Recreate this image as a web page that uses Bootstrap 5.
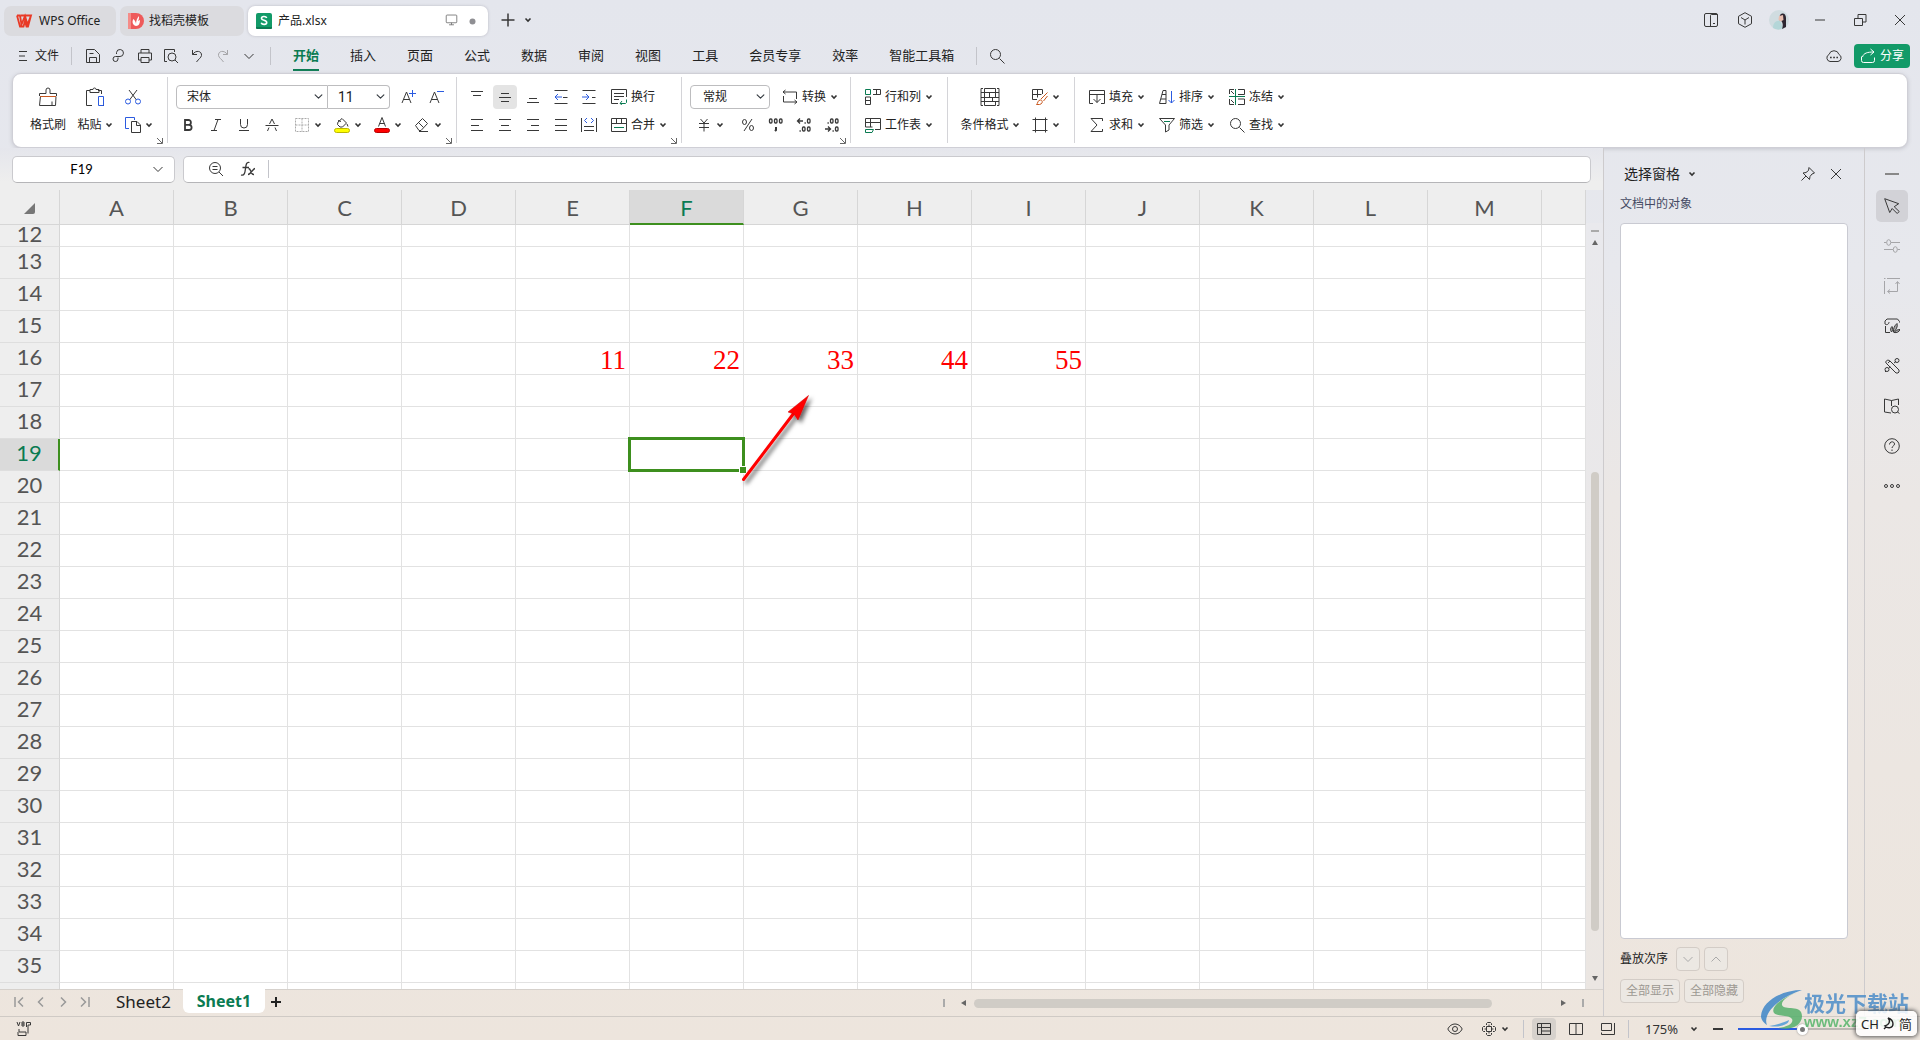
<!DOCTYPE html>
<html lang="zh-CN">
<head>
<meta charset="utf-8">
<meta name="viewport" content="width=device-width, initial-scale=1">
<title>产品.xlsx - WPS Office</title>
<link href="https://cdn.jsdelivr.net/npm/bootstrap@5.3.0/dist/css/bootstrap.min.css" rel="stylesheet">
<style>
  :root { --ink:#2b2b2b; --line:#cbcbd2; --brand:#0a7b52; --blue:#2b5be0; }
  body { font-family:"Noto Sans","Noto Sans CJK SC",sans-serif; font-size:12px; line-height:16px; color:#222;
    background:linear-gradient(180deg,#e4e6ed 0,#e7e8ed 26%,#ebe7e5 48%,#ede5dd 100%) fixed; }
  button { border:0; background:none; padding:0; color:inherit; white-space:nowrap; }
  svg { display:block; flex:none; overflow:visible; }
  .ic { width:16px; height:16px; fill:none; stroke:currentColor; color:#383838; }
  .ic-l { width:20px; height:20px; }
  .crt { width:8px; height:8px; fill:none; stroke:#333; stroke-width:1.6; }
  .b { stroke:var(--blue); } .g { stroke:var(--brand); } .o { stroke:#c9581f; }

  .titlebar { height:40px; padding:2px 0 0 4px; }
  .doc-tab { height:30px; margin-top:2px; background:#dbdbdf; border-radius:7px; }
  .doc-tab.on { background:#fff; box-shadow:0 0 3px #b9b9c2; }
  .tab-a { width:112px; padding-left:12px; } .tab-b { width:124px; padding-left:8px; } .tab-c { width:240px; padding:0 12px 0 8px; }
  .tab-a a { margin-left:7px; } .tab-b a { margin-left:5px; } .tab-c a { margin-left:6px; }
  .win-btn { width:40px; height:32px; }
  .avatar { width:20px; height:20px; }

  .menubar { height:35px; padding:0 10px 0 15px; }
  .quick { width:26px; height:26px; }
  .vr-s { width:1px; height:18px; background:#c3c4ca; }
  .menu-tabs { gap:31px; font-size:13px; padding:0 22px; }
  .menu-tabs a { color:#222; text-decoration:none; padding:5px 0; line-height:18px; border-bottom:2px solid transparent; }
  .menu-tabs a.on { color:var(--brand); font-weight:700; border-color:var(--brand); }
  .share { width:56px; height:24px; background:#129a68; color:#fff; border-radius:4px; }
  .share .ic { color:#fff; }

  .ribbon { height:75px; margin:0 12px; background:#fff; border:1px solid #cfcfd6; border-radius:9px; box-shadow:0 1px 4px #c3c4cc; }
  .rgroup { height:66px; margin-top:3px; border-right:1px solid #d4d4d8; position:relative; padding-top:6px; }
  .rgroup.last { border:0; }
  .rrow { display:flex; height:28px; align-items:center; }
  .ib { width:28px; height:24px; display:flex; align-items:center; justify-content:center; border-radius:4px; }
  .ib.on { background:#e4e4e4; width:24px; margin:0 2px; }
  .dd { width:40px; height:24px; display:flex; align-items:center; justify-content:center; gap:4px; }
  .dds { padding-left:2px; }
  .lb { height:24px; display:flex; align-items:center; gap:4px; width:70px; }
  .lb.w { width:82px; }
  .big { display:flex; flex-direction:column; align-items:center; height:56px; }
  .big > span { height:28px; display:flex; align-items:center; gap:3px; }
  .corner { position:absolute; right:4px; bottom:-1px; width:6px; height:6px; fill:none; stroke:#666; }
  .g1 { width:155px; padding-left:8px; } .g2 { width:289px; padding-left:6px; } .g3 { width:225px; padding-left:6px; }
  .g4 { width:169px; padding-left:8px; } .g5 { width:97px; padding-left:14px; } .g6 { width:127px; padding-left:10px; } .g7 { padding-left:14px; }
  .pick { height:24px; border:1px solid #bdbdbf; border-radius:4px; font-size:12px; line-height:16px; padding:3px 20px 3px 10px;
    background-size:9px; background-position:right 4px center; color:#222; }
  .pick.f { width:152px; border-radius:4px 0 0 4px; margin-left:2px; } .pick.s { width:62px; border-left:0; border-radius:0 4px 4px 0; font-family:Roboto,sans-serif; font-size:14px; }
  .pick.n { width:80px; padding-left:12px; }
  .a-btns { margin-left:4px; }

  .fbar { padding:8px 12px 0; gap:8px; height:42px; background:linear-gradient(#e5e6ec,#eee 80%); }
  .fbox { height:27px; background:#fff; border:1px solid #cacace; border-bottom-color:#b5b5b8; border-radius:5px; }
  .fbox input { border:0; outline:0; background:transparent; min-width:0; font-size:13px; }
  .namebox { width:163px; padding-right:8px; }
  .namebox input { text-align:center; font-family:Lato,sans-serif; }

  .grid-view { overflow:hidden; position:relative; background:#fff; min-height:0; }
  .cells { table-layout:fixed; width:100%; min-width:1556px; border-collapse:separate; border-spacing:0; font-family:Lato,sans-serif; }
  .cells th { background:#eee; color:#555; font-weight:400; font-size:22px; text-align:center; border:solid #d6d6d6; border-width:0 1px 1px 0; padding:0; }
  .cells thead th { height:34px; line-height:30px; padding-top:3px; }
  .cells tbody th { height:32px; line-height:27px; padding-bottom:4px; border-bottom-color:#dedede; }
  .cells td { border:solid #e2e2e2; border-width:0 1px 1px 0; padding:4px 3px 0 0; text-align:right; color:red; font:27px/27px "Liberation Serif",serif; }
  .cells tr.cut th, .cells tr.cut td { height:22px; line-height:17px; padding-top:0; padding-bottom:4px; }
  .cells thead th.on { background:#dadada; color:var(--brand); border-bottom:2px solid #3d8f1e; }
  .cells tbody th.on { background:#dadada; color:var(--brand); border-right:2px solid #3d8f1e; }
  .c-head { width:60px; } .c-col { width:114px; }
  .cells td.sel { position:relative; }
  .sel::before { content:""; position:absolute; inset:-2px -2px -2px -2px; border:3px solid #3d8f1e; }
  .sel::after { content:""; position:absolute; right:-3px; bottom:-3px; width:6px; height:6px; background:#3d8f1e; outline:1px solid #fff; }
  .arrow { position:absolute; left:735px; top:200px; width:90px; height:100px; }
  .vscroll { width:17px; padding-top:7px; margin-top:33px; background:linear-gradient(#e9e9ed,#ebe6e2); }
  .tri { fill:#666; }

  .sheetbar { height:27px; border-top:1px solid #d6d1cc; }
  .sheet { font-size:17px; line-height:24px; color:#222; text-decoration:none; }
  .sheet.on { background:#fff; color:var(--brand); font-weight:700; font-size:16px; border-radius:0 0 6px 6px; width:82px; height:24px; text-align:center; margin-top:-1px; }
  .nav-b { width:22px; height:24px; display:flex; align-items:center; justify-content:center; }
  .nav-b .ic { width:10px; height:12px; color:#999; stroke-width:1.5; }
  .thumb { background:#d0ccc6; border-radius:5px; }
  .hthumb { height:9px; width:518px; }
  .vthumb { width:8px; flex:0 1 459px; margin-top:227px; }
  .hscroll { width:641px; margin-right:19px; }
  .left-edge { border-right:1px solid #cdcbcd; }

  .panel { width:261px; border-right:1px solid #cdcbcd; padding:0 16px 13px; }
  .panel-title { font-size:14px; line-height:20px; }
  .objects { background:#fff; border:1px solid #c9cad2; border-radius:4px; }
  .sub { color:#454a63; padding:8px 0 11px; }
  .pb { height:24px; border:1px solid #d3ccc6; border-radius:4px; background:#ece8e3; color:#9c9892; }
  .pb.sq { width:24px; } .pb.tx { width:60px; }
  .side { width:55px; padding:10px 2px 0 0; }
  .side button { width:32px; height:32px; margin-bottom:8px; border-radius:5px; display:flex; align-items:center; justify-content:center; }
  .side button.on { background:#d2d2d7; }
  .side button.min { margin-bottom:0; }
  .dim .ic { color:#a5a5a8; }

  .statusbar { height:24px; border-top:1px solid #cfcac5; padding-left:16px; }
  .st { width:24px; height:22px; display:flex; align-items:center; justify-content:center; border-radius:4px; }
  .statusbar .dd { height:22px; }
  .st.on { background:#d6d1cc; }
  .stools { width:477px; }
  .zoomv { font-size:13px; color:#333; }
  .zoomer { appearance:none; width:128px; height:14px; background:transparent; margin:0; }
  .zoomer::-webkit-slider-runnable-track { height:2px; background:linear-gradient(90deg,var(--blue) 50%,#bdb8b3 50%); }
  .zoomer::-webkit-slider-thumb { appearance:none; width:11px; height:11px; margin-top:-4px; border-radius:50%; background:#777; border:3px solid #fff; box-shadow:0 0 2px #888; }
  .wmark { position:absolute; right:8px; bottom:9px; width:152px; opacity:.85; pointer-events:none; }
  .wmark .cn { font:700 21px/24px "Noto Sans CJK SC",sans-serif; color:#4d8dc9; white-space:nowrap; }
  .wmark .en { font:700 15px/16px "Liberation Sans",sans-serif; color:#57b56c; white-space:nowrap; }
  .ime { position:absolute; right:3px; bottom:4px; width:61px; height:25px; background:rgba(255,255,255,.85); border-radius:5px; box-shadow:0 0 4px 1px #555; font-size:13px; color:#222; gap:4px; }
</style>
</head>
<body class="vh-100 d-flex flex-column overflow-hidden position-relative">

<svg width="0" height="0" class="position-absolute" aria-hidden="true">
  <symbol id="caret" viewBox="0 0 8 8"><path d="M1.500 2.500 4 5l2.500-2.500"/></symbol>
  <symbol id="chev" viewBox="0 0 16 16"><path d="M3.500 6 8 10.500 12.500 6"/></symbol>
  <symbol id="menu" viewBox="0 0 16 16"><path d="M4 3.500h8M4 8h6M4 12.500h8"/></symbol>
  <symbol id="save" viewBox="0 0 16 16"><path d="M1.500 14.500v-13h8l5 5v8zM4.500 14.500v-5h7v5M4.500 5.500h4"/></symbol>
  <symbol id="export" viewBox="0 0 16 16"><path d="M5.500 6V4.500a3.500 3.500 0 1 1 3.500 4H4.500a2.500 2.500 0 1 0 2.500 2.500V9.500"/></symbol>
  <symbol id="print" viewBox="0 0 16 16"><path d="M4 5V1.500h8V5M4 12H1.500V5h13v7H12M4 9.500h8v5H4z"/></symbol>
  <symbol id="preview" viewBox="0 0 16 16"><path d="M4 13.500H1.500v-12h10V4"/><circle cx="9" cy="9" r="4"/><path d="m12 12 3 3"/></symbol>
  <symbol id="undo" viewBox="0 0 16 16"><path d="M3.500 2v4.500H8M3.500 6.500C7 1.500 13 3 12.500 7.500 12 10 9.500 11 7.500 14"/></symbol>
  <symbol id="redo" viewBox="0 0 16 16"><path d="M12.500 2v4.500H8M12.500 6.500C9 1.500 3 3 3.500 7.500 4 10 6.500 11 8.500 14"/></symbol>
  <symbol id="search" viewBox="0 0 16 16"><circle cx="6.500" cy="6.500" r="5"/><path d="m10.500 10.500 5 5"/></symbol>
  <symbol id="cloud" viewBox="0 0 16 16"><path d="M4 13.500a3.700 3.700 0 0 1-1-7 5.200 5.200 0 0 1 10 0 3.700 3.700 0 0 1-1 7z"/><path d="M4 9.500h1.700M7.200 9.500h1.700M10.400 9.500H12" stroke-width="1.700"/></symbol>
  <symbol id="share" viewBox="0 0 16 16"><path d="M1.500 8.500v4a2 2 0 0 0 2 2h9a2 2 0 0 0 2-2V9.500M2.500 9c1-4 5-5 11.500-5M10.500 1 14 4l-3.500 3"/></symbol>
  <symbol id="layout" viewBox="0 0 16 16"><rect x="1.500" y="1.500" width="13" height="13" rx="1.500"/><path d="M7.500 14.500v-11a1 1 0 0 1 1-1h6M10 11.500h2"/></symbol>
  <symbol id="cube" viewBox="0 0 16 16"><path d="m8 .7 6.500 3.600v7.400L8 15.300l-6.500-3.600V4.300zM4 5.500 8 8l4-2.500M8 8v4.500"/></symbol>
  <symbol id="minus" viewBox="0 0 16 16"><path d="M3 8h10"/></symbol>
  <symbol id="restore" viewBox="0 0 16 16"><path d="M2.500 6.500h8v7h-8zM6 6V2.500h8V10h-3.500"/></symbol>
  <symbol id="close" viewBox="0 0 16 16"><path d="m3 3 10 10M13 3 3 13"/></symbol>
  <symbol id="brush" viewBox="0 0 20 20"><path d="M1.500 9V6.500H8V3a2 2 0 0 1 4 0v3.500h6.500V9M2.500 9 1.500 18.500h16L18 9.500M14 14.500v4"/><path class="o" d="M2 9.500h16"/></symbol>
  <symbol id="paste" viewBox="0 0 20 20"><path d="M7 18.500H1.500v-15H5M13 3.500h3.500V7M5 5.500v-3h3a1.500 1.500 0 0 1 3 0h3v3zM16 18.500h3"/><path class="b" d="M13.500 9.500h5v9h-5z"/></symbol>
  <symbol id="cut" viewBox="0 0 16 16"><path d="m4 1 7.500 10M12 1 4.500 11"/><circle class="b" cx="3" cy="12.500" r="2.500"/><circle class="b" cx="13" cy="12.500" r="2.500"/></symbol>
  <symbol id="copy" viewBox="0 0 16 16"><path class="b" d="M4 11.500H.5V.5h9V3"/><path d="M6.500 4.500H12l3.500 3.500v7.500h-9zM11.500 5v3.500h4"/></symbol>
  <symbol id="bold" viewBox="0 0 16 16"><path stroke-width="1.800" d="M5 3h3.500a2.300 2.300 0 0 1 0 4.800H5zM5 7.800h4a2.600 2.600 0 0 1 0 5.200H5z"/></symbol>
  <symbol id="italic" viewBox="0 0 16 16"><path d="M7 2.500h6M3 13.500h6M10 2.500l-4 11"/></symbol>
  <symbol id="under" viewBox="0 0 16 16"><path d="M4.500 2v5.500a3.500 3.500 0 0 0 7 0V2M3 13.500h10"/></symbol>
  <symbol id="strike" viewBox="0 0 16 16"><path d="M1.500 8.500h13M5.500 7 8 2l2.500 5M5 10.500 3.500 14M11 10.500l1.500 3.500"/></symbol>
  <symbol id="border" viewBox="0 0 16 16"><path stroke="#aaa" stroke-dasharray="2 1" d="M1.500 1.500h13v13h-13zM8 1.500v13M1.500 8h13"/></symbol>
  <symbol id="fill" viewBox="0 0 16 16"><path d="m4 5 4-3.500 4.500 4.500-4 4H6L3.500 7.500zM4 3.500l3 1M13 7l1 2.500"/><rect x=".5" y="11.500" width="15" height="4" rx="2" fill="#ff0" stroke="#bdb800"/></symbol>
  <symbol id="fcolor" viewBox="0 0 16 16"><path d="M4.500 9.500 8 .5l3.500 9M5.500 6.500h5"/><rect x=".5" y="11.500" width="15" height="4" rx="2" fill="red" stroke="#b80000"/></symbol>
  <symbol id="erase" viewBox="0 0 16 16"><path d="m1.500 8.500 7-7 5 5-6.500 7H5zM4.500 5.500l5 5M5 14.500h9"/></symbol>
  <symbol id="aup" viewBox="0 0 16 16"><path d="m2 14 4.500-11L11 14M3.500 10.500h6"/><path class="b" d="M12.500 1v7M9 4.500h7"/></symbol>
  <symbol id="adn" viewBox="0 0 16 16"><path d="m2 14 4.500-11L11 14M3.500 10.500h6"/><path class="b" d="M9 2.500h7"/></symbol>
  <symbol id="vtop" viewBox="0 0 16 16"><path d="M2 2.500h12M4 6.500h8"/></symbol>
  <symbol id="vmid" viewBox="0 0 16 16"><path d="M4 4.500h8M2 8.500h12M4 12.500h8"/></symbol>
  <symbol id="vbot" viewBox="0 0 16 16"><path d="M4 9.500h8M2 13.500h12"/></symbol>
  <symbol id="outd" viewBox="0 0 16 16"><path d="M1.500 1.500h13M10 8.500h4.500M1.500 14.500h13"/><path class="b" d="M9 8H2M5 5 2 8l3 3"/></symbol>
  <symbol id="ind" viewBox="0 0 16 16"><path d="M1.500 1.500h13M11 8.500h3.500M1.500 14.500h13"/><path class="b" d="M1 8h7M5 5l3 3-3 3"/></symbol>
  <symbol id="left" viewBox="0 0 16 16"><path d="M2 2.500h12M2 8.500h8M2 13.500h12"/></symbol>
  <symbol id="center" viewBox="0 0 16 16"><path d="M2 2.500h12M4 8.500h8M2 13.500h12"/></symbol>
  <symbol id="right" viewBox="0 0 16 16"><path d="M2 2.500h12M6 8.500h8M2 13.500h12"/></symbol>
  <symbol id="just" viewBox="0 0 16 16"><path d="M2 2.500h12M2 8.500h12M2 13.500h12"/></symbol>
  <symbol id="dist" viewBox="0 0 16 16"><path d="M.5 1v14M15.500 1v14M3 9.500h10M3 13.500h10"/><path class="b" d="M6 1 3.500 3.500 6 6M10 1l2.500 2.500L10 6"/></symbol>
  <symbol id="wrap" viewBox="0 0 16 16"><path d="M7 14.500H.5V.5h15V8M3 4.500h10M3 7.500h10M3 10.500h5"/><path class="g" d="M15.500 10.500v3l-1 1H9M11 12l-2 2.500 2 1"/></symbol>
  <symbol id="merge" viewBox="0 0 16 16"><path d="M.5 1.500h15v13H.5zM.5 6.500h15M5.500 1.500v5M10.500 1.500v5"/><path class="g" d="M3 10.500h10"/></symbol>
  <symbol id="convert" viewBox="0 0 16 16"><path d="M3.500 1 1 3l2.500 2M1 3h13.500v7M1.500 7v6H15M12.500 11l2.500 2-2.500 2"/></symbol>
  <symbol id="yen" viewBox="0 0 16 16"><path d="m4.500 2 3.500 4 3.500-4M3 6.500h10M3 10.500h10M8 6.500v8"/></symbol>
  <symbol id="pct" viewBox="0 0 16 16"><ellipse cx="4.500" cy="5" rx="2" ry="2.500"/><ellipse cx="11.500" cy="11" rx="2" ry="2.500"/><path d="m12 2-8 12"/></symbol>
  <symbol id="k000" viewBox="0 0 16 16"><g stroke-width="1.300"><rect x="1.500" y="2" width="2.500" height="4" rx="1"/><rect x="6.500" y="2" width="2.500" height="4" rx="1"/><rect x="11.500" y="2" width="2.500" height="4" rx="1"/><path stroke-width="2" d="M8 10v3l-1 1"/></g></symbol>
  <symbol id="decl" viewBox="0 0 16 16"><g stroke-width="1.300"><path d="M7 4H1.500M4 1.500 1.500 4 4 6.500"/><rect x="11.500" y="2" width="2.500" height="4" rx="1"/><rect x="6.500" y="10" width="2.500" height="4" rx="1"/><rect x="11.500" y="10" width="2.500" height="4" rx="1"/><path d="M8.500 6h1.300M3.500 14h1.300"/></g></symbol>
  <symbol id="decr" viewBox="0 0 16 16"><g stroke-width="1.300"><path d="M1 12h5.500M4 9.500 6.500 12 4 14.500"/><rect x="11.500" y="2" width="2.500" height="4" rx="1"/><rect x="6.500" y="2" width="2.500" height="4" rx="1"/><rect x="11.500" y="10" width="2.500" height="4" rx="1"/><path d="M3.500 6h1.300M8.500 14h1.300"/></g></symbol>
  <symbol id="rows" viewBox="0 0 16 16"><path d="M8 .5h7.500v5H8M11.500.5v5M.5 8h5v7.500h-5zM.5 11.500h5"/><path class="g" d="M.5.5h5v5h-5z"/></symbol>
  <symbol id="wsheet" viewBox="0 0 16 16"><path d="M.5 10V1.500h15v11H10M.5 5.500h15M5.500 1.500V10M.5 10h7"/><path class="g" d="M.5 12.500v3H7l1.500-3z"/></symbol>
  <symbol id="cond" viewBox="0 0 20 20"><path d="M3 1.500H1v17h2M17 1.500h2v17h-2M4.500 1.500h11v4h-11zM4.500 5.500v9M15.500 5.500v5M1 10.500h18M1 5.500h18M4.500 14.500h11v4h-11zM1 14.500h18M9.500 5.500v5M12.500 10.500v4"/></symbol>
  <symbol id="style" viewBox="0 0 16 16"><path d="M5 10.500H.5V.5h10V5M.5 5.500h9M5.500.5v8"/><path class="o" d="M15.500 3.500 9 10M15.500 7l-4 5M4.500 15.500c1.500-1 1-4.500 4-4.500 2.500 0 2.500 4-1 4.500z"/></symbol>
  <symbol id="frame" viewBox="0 0 16 16"><path d="M3.500.5v15M13.500.5v15M.5 2.500h15M.5 13.500h15"/></symbol>
  <symbol id="filld" viewBox="0 0 16 16"><path d="M4 14.500H.5v-13h15v13H12M.5 5.500h15M8 5.500v8M4.500 10 8 13.500 11.500 10"/></symbol>
  <symbol id="sum" viewBox="0 0 16 16"><path d="M13.500 4V1.500H2L8 8l-6 6.500h11.500V12"/></symbol>
  <symbol id="sort" viewBox="0 0 16 16"><path d="m.5 14.500 3.500-13h3v13M2 10h5M3 5.500h4M.5 14.500H7"/><path class="b" d="M12.500 2v12M9.500 11l3 3 3-3"/></symbol>
  <symbol id="filter" viewBox="0 0 16 16"><path d="M.5 1.500h15L10 8v5l-3.500 2V8z"/><path class="g" d="M5 4.500h6"/></symbol>
  <symbol id="freeze" viewBox="0 0 16 16"><path d="M5 .5H.5V5M2 2l3 3M9 .5h6.500v5H9M.5 10v5.500H5M2 11l3 3M9 10h6.500v5.500H9"/><path class="g" d="M6.500 0v16M0 7.500h16"/></symbol>
  <symbol id="fx" viewBox="0 0 16 16"><path stroke-width="1.300" d="M9.500 1.500c-3-1-3.500 2-4 6S4.500 15 1 14M2.500 6.500H9M8.500 7.500c3 0 2 6.500 5.500 6M15 7.500c-2 0-4.500 6-7 6"/></symbol>
  <symbol id="fsearch" viewBox="0 0 16 16"><circle cx="7" cy="7" r="5.500"/><path d="m11 11 4 4M4.500 5.500h5M4.500 8.500h5"/></symbol>
  <symbol id="pin" viewBox="0 0 16 16"><path d="m9 1.500 5.500 5.500-2.500 1-2 2.500-.5 3L3 7l3-.5 2.500-2zM6 10l-4.500 4.500"/></symbol>
  <symbol id="cursor" viewBox="0 0 16 16"><path d="m.7.7 14 5-4.500 3 5 4.800-2 2-5-5-2.500 4z"/></symbol>
  <symbol id="sliders" viewBox="0 0 16 16"><path d="M0 4.500h2.500M7 4.500h9M0 11.500h9M13.500 11.500H16"/><ellipse cx="4.700" cy="4.500" rx="2" ry="2.800"/><ellipse cx="11.300" cy="11.500" rx="2" ry="2.800"/></symbol>
  <symbol id="resize" viewBox="0 0 16 16"><path d="M3 .5h13M.5 3v13M0 .5h1.500M13.500 4v9.500H4M11.500 6l2-2.500 2 2.500M6 11.500l-2.500 2 2.500 2"/></symbol>
  <symbol id="beauty" viewBox="0 0 16 16"><path d="M15.500 4.500v-1l-2-2.500H3L1 3v3c2 1.500 4 0 4-2M1.500 8v6.500H6"/><path fill="currentColor" fill-opacity=".35" d="M7.500 14c-1.500-2-1-4 .5-5.500 1 2 1 4-.5 5.500zM9.500 14c-.5-3 1-6.500 3.500-8.500 1 3-1 6.500-3.500 8.500zM10 14.500c1.500-2 3.500-3 6-3-1 2.500-3 3.500-6 3z"/></symbol>
  <symbol id="tools" viewBox="0 0 16 16"><path d="m1.500 4 2-2 2 .5L15 12v2l-1 1h-2L3 6zM6 3 4 5"/><circle cx="13" cy="2.500" r="2"/><circle cx="3" cy="11.500" r="2"/><path d="m10 5 2-1.500M5 10l1-1.500M1 14l1-1"/></symbol>
  <symbol id="book" viewBox="0 0 16 16"><path d="M7 15 .5 14V1L7.500 2.500 14.500 1v6M7.500 2.500V8"/><circle cx="11" cy="11.500" r="3.500"/><path d="m13.500 14 2 1.500"/></symbol>
  <symbol id="help" viewBox="0 0 16 16"><circle cx="8" cy="8" r="7.300"/><path d="M5.500 6.500c0-3.500 5-3.500 5-.5C10.500 8 8 8 8 10M8 11.500V13"/></symbol>
  <symbol id="more" viewBox="0 0 16 16"><circle cx="2" cy="8" r="1.500"/><circle cx="8" cy="8" r="1.500"/><circle cx="14" cy="8" r="1.500"/></symbol>
  <symbol id="eye" viewBox="0 0 16 16"><path d="M.8 8C4 1.300 12 1.300 15.200 8 12 14.700 4 14.700.8 8z"/><circle cx="8" cy="8" r="2.500"/></symbol>
  <symbol id="cross" viewBox="0 0 16 16"><path d="M5.500 4V2.500l1-1h3l1 1V4M12 5.500h1.500l1 1v3l-1 1H12M10.500 12v1.500l-1 1h-3l-1-1V12M4 10.500H2.500l-1-1v-3l1-1H4M5.500 5.500h5v5h-5zM8 3.500v2M8 10.500v2M3.500 8h2M10.500 8h2"/></symbol>
  <symbol id="normal" viewBox="0 0 16 16"><path d="M1.500 2.500h13v11h-13zM1.500 6.500h13M5.500 2.500v11M5.500 10h9"/></symbol>
  <symbol id="split" viewBox="0 0 16 16"><path d="M1.500 2.500h13v11h-13zM8 2.500v11"/></symbol>
  <symbol id="read" viewBox="0 0 16 16"><path d="M1.500 2.500h10v7h-10zM14.500 2v11.500h-13v-2"/></symbol>
  <symbol id="macro" viewBox="0 0 16 16"><path d="m1 1 1.500 4L4 1M6 1v4h2V3H6M8 3V1H6M10.500 6V1.500h4V4h-2.500v8.500M3 8v3h7v3.500H2V11"/></symbol>
  <symbol id="screen" viewBox="0 0 16 16"><rect x="1.500" y="2.500" width="13" height="9.500" rx="1"/><path d="M5 14.500h6M8 12v2.500"/></symbol>
  <symbol id="plus" viewBox="0 0 16 16"><path d="M8 1.500v13M1.500 8h13"/></symbol>
</svg>

<header class="titlebar d-flex align-items-center">
  <div class="doc-tab tab-a d-flex align-items-center me-1">
    <svg width="16" height="14" viewBox="0 0 16 14"><path d="M1 1.500h3l1.500 9L9 2l2.500 8.500L15 1.500H5M1 1.500l3 11h3.500L9 7l1.500 5.500h1.500L15 1.500" fill="none" stroke="#e93a26" stroke-width="1.800"/></svg>
    <a class="text-reset text-decoration-none" href="#">WPS Office</a>
  </div>
  <div class="doc-tab tab-b d-flex align-items-center me-1">
    <svg width="16" height="16" viewBox="0 0 16 16"><path d="M0 0h8a8 8 0 0 1 0 16H0z" fill="#ee5a5a"/><path d="M0 0h3v16H0z" fill="#f58c88"/><path d="M8 13C4 12 4 8 5.500 6 7 8 8 9 8 11c0-3 1-6 3-8 0 2 0 3-1 5l2-1c0 3-1 6-4 6z" fill="#fff"/></svg>
    <a class="text-reset text-decoration-none" href="#">找稻壳模板</a>
  </div>
  <div class="doc-tab on tab-c d-flex align-items-center">
    <svg width="16" height="16" viewBox="0 0 16 16"><rect width="16" height="16" rx="2" fill="#129a68"/><path d="M0 14h16v1a1 1 0 0 1-1 1H1a1 1 0 0 1-1-1z" fill="#0a7b52"/><path d="M10.700 5C10 3 5.500 3 5.500 5.400c0 2.400 5.200 1.400 5.200 4 0 2.600-4.700 2.600-5.500.3" fill="none" stroke="#fff" stroke-width="1.600"/></svg>
    <a class="me-auto text-reset text-decoration-none" href="#">产品.xlsx</a>
    <svg class="ic opacity-75" width="13" height="13"><use href="#screen" width="13" height="13"/></svg>
    <svg class="ms-2" width="7" height="7"><circle cx="3.500" cy="3.500" r="3" fill="#8f8f93"/></svg>
  </div>
  <button class="ms-1 p-1 ps-2" aria-label="新建"><svg class="ic" stroke-width="1.5"><use href="#plus"/></svg></button>
  <button class="p-1" aria-label="标签列表"><svg class="crt"><use href="#caret"/></svg></button>
  <div class="ms-auto d-flex align-items-center">
    <button class="quick me-1" aria-label="布局"><svg class="ic mx-auto"><use href="#layout"/></svg></button>
    <button class="quick me-2 ms-1" aria-label="应用"><svg class="ic mx-auto"><use href="#cube"/></svg></button>
    <button class="quick me-2" aria-label="账号"><svg class="avatar mx-auto" viewBox="0 0 20 20"><circle cx="10" cy="10" r="10" fill="#d0dce0"/><path d="M4 18c0-5 3-8 7-7l3 7a10 10 0 0 1-10 0z" fill="#b4d6d8"/><path d="M11 5c3-3 6-1 6 3v9l-4 2c2-5 0-9-3-9z" fill="#2d2630"/><path d="M10 6l4-1 .5 5-3 1.500-2-2z" fill="#e8bfb0"/></svg></button>
    <button class="win-btn" aria-label="最小化"><svg class="ic mx-auto"><use href="#minus"/></svg></button>
    <button class="win-btn" aria-label="还原"><svg class="ic mx-auto"><use href="#restore"/></svg></button>
    <button class="win-btn" aria-label="关闭"><svg class="ic mx-auto"><use href="#close"/></svg></button>
  </div>
</header>

<nav class="menubar d-flex align-items-center">
  <button class="d-flex align-items-center gap-1 me-2"><svg class="ic"><use href="#menu"/></svg>文件</button>
  <span class="vr-s ms-1 me-1"></span>
  <div class="d-flex ps-1">
    <button class="quick" aria-label="保存"><svg class="ic mx-auto"><use href="#save"/></svg></button>
    <button class="quick" aria-label="输出"><svg class="ic mx-auto"><use href="#export"/></svg></button>
    <button class="quick" aria-label="打印"><svg class="ic mx-auto"><use href="#print"/></svg></button>
    <button class="quick" aria-label="预览"><svg class="ic mx-auto"><use href="#preview"/></svg></button>
    <button class="quick" aria-label="撤销"><svg class="ic mx-auto"><use href="#undo"/></svg></button>
    <button class="quick dim" aria-label="恢复"><svg class="ic mx-auto"><use href="#redo"/></svg></button>
    <button class="quick" aria-label="更多"><svg class="ic mx-auto"><use href="#chev"/></svg></button>
  </div>
  <span class="vr-s ms-2"></span>
  <div class="menu-tabs d-flex">
    <a class="on" href="#">开始</a><a href="#">插入</a><a href="#">页面</a><a href="#">公式</a><a href="#">数据</a><a href="#">审阅</a><a href="#">视图</a><a href="#">工具</a><a href="#">会员专享</a><a href="#">效率</a><a href="#">智能工具箱</a>
  </div>
  <span class="vr-s"></span>
  <button class="ms-2 ps-1" aria-label="搜索"><svg class="ic"><use href="#search"/></svg></button>
  <button class="ms-auto me-2 pe-1" aria-label="云"><svg class="ic"><use href="#cloud"/></svg></button>
  <button class="share d-flex align-items-center justify-content-center gap-1"><svg class="ic"><use href="#share"/></svg>分享</button>
</nav>

<section class="ribbon d-flex flex-shrink-0">
  <div class="rgroup g1 d-flex">
    <button class="big" style="width:54px"><span><svg class="ic ic-l"><use href="#brush"/></svg></span><span>格式刷</span></button>
    <button class="big" style="width:40px"><span><svg class="ic ic-l"><use href="#paste"/></svg></span><span>粘贴<svg class="crt"><use href="#caret"/></svg></span></button>
    <div>
      <div class="rrow"><button class="ib ms-1" aria-label="剪切"><svg class="ic"><use href="#cut"/></svg></button></div>
      <div class="rrow"><button class="dd ms-1" aria-label="复制"><svg class="ic"><use href="#copy"/></svg><svg class="crt"><use href="#caret"/></svg></button></div>
    </div>
    <svg class="corner"><path d="M0 0l5 5M5.500 0v5.500H0"/></svg>
  </div>
  <div class="rgroup g2">
    <div class="rrow">
      <select class="form-select pick f" aria-label="字体"><option>宋体</option></select><select class="form-select pick s" aria-label="字号"><option>11</option></select>
      <button class="ib a-btns" aria-label="增大字号"><svg class="ic"><use href="#aup"/></svg></button>
      <button class="ib" aria-label="减小字号"><svg class="ic"><use href="#adn"/></svg></button>
    </div>
    <div class="rrow">
      <button class="ib" aria-label="加粗"><svg class="ic"><use href="#bold"/></svg></button>
      <button class="ib" aria-label="倾斜"><svg class="ic"><use href="#italic"/></svg></button>
      <button class="ib" aria-label="下划线"><svg class="ic"><use href="#under"/></svg></button>
      <button class="ib" aria-label="删除线"><svg class="ic"><use href="#strike"/></svg></button>
      <div class="dds d-flex">
      <button class="dd" aria-label="边框"><svg class="ic"><use href="#border"/></svg><svg class="crt"><use href="#caret"/></svg></button>
      <button class="dd" aria-label="填充颜色"><svg class="ic"><use href="#fill"/></svg><svg class="crt"><use href="#caret"/></svg></button>
      <button class="dd" aria-label="字体颜色"><svg class="ic"><use href="#fcolor"/></svg><svg class="crt"><use href="#caret"/></svg></button>
      <button class="dd" aria-label="清除"><svg class="ic"><use href="#erase"/></svg><svg class="crt"><use href="#caret"/></svg></button>
      </div>
    </div>
    <svg class="corner"><path d="M0 0l5 5M5.500 0v5.500H0"/></svg>
  </div>
  <div class="rgroup g3">
    <div class="rrow">
      <button class="ib" aria-label="顶端对齐"><svg class="ic"><use href="#vtop"/></svg></button>
      <button class="ib on" aria-label="垂直居中"><svg class="ic"><use href="#vmid"/></svg></button>
      <button class="ib" aria-label="底端对齐"><svg class="ic"><use href="#vbot"/></svg></button>
      <button class="ib" aria-label="减少缩进"><svg class="ic"><use href="#outd"/></svg></button>
      <button class="ib" aria-label="增加缩进"><svg class="ic"><use href="#ind"/></svg></button>
      <button class="lb ms-2"><svg class="ic"><use href="#wrap"/></svg>换行</button>
    </div>
    <div class="rrow">
      <button class="ib" aria-label="左对齐"><svg class="ic"><use href="#left"/></svg></button>
      <button class="ib" aria-label="水平居中"><svg class="ic"><use href="#center"/></svg></button>
      <button class="ib" aria-label="右对齐"><svg class="ic"><use href="#right"/></svg></button>
      <button class="ib" aria-label="两端对齐"><svg class="ic"><use href="#just"/></svg></button>
      <button class="ib" aria-label="分散对齐"><svg class="ic"><use href="#dist"/></svg></button>
      <button class="lb ms-2"><svg class="ic"><use href="#merge"/></svg>合并<svg class="crt"><use href="#caret"/></svg></button>
    </div>
    <svg class="corner"><path d="M0 0l5 5M5.500 0v5.500H0"/></svg>
  </div>
  <div class="rgroup g4">
    <div class="rrow">
      <select class="form-select pick n" aria-label="数字格式"><option>常规</option></select>
      <button class="lb ms-2 ps-1"><svg class="ic"><use href="#convert"/></svg>转换<svg class="crt"><use href="#caret"/></svg></button>
    </div>
    <div class="rrow">
      <button class="dd" aria-label="货币"><svg class="ic"><use href="#yen"/></svg><svg class="crt"><use href="#caret"/></svg></button>
      <button class="ib ms-1" aria-label="百分比"><svg class="ic"><use href="#pct"/></svg></button>
      <button class="ib" aria-label="千位分隔"><svg class="ic"><use href="#k000"/></svg></button>
      <button class="ib" aria-label="增加小数位"><svg class="ic"><use href="#decl"/></svg></button>
      <button class="ib" aria-label="减少小数位"><svg class="ic"><use href="#decr"/></svg></button>
    </div>
    <svg class="corner"><path d="M0 0l5 5M5.500 0v5.500H0"/></svg>
  </div>
  <div class="rgroup g5">
    <div class="rrow"><button class="lb w"><svg class="ic"><use href="#rows"/></svg>行和列<svg class="crt"><use href="#caret"/></svg></button></div>
    <div class="rrow"><button class="lb w"><svg class="ic"><use href="#wsheet"/></svg>工作表<svg class="crt"><use href="#caret"/></svg></button></div>
  </div>
  <div class="rgroup g6 d-flex">
    <button class="big" style="width:64px"><span><svg class="ic ic-l"><use href="#cond"/></svg></span><span>条件格式<svg class="crt"><use href="#caret"/></svg></span></button>
    <div class="ps-1">
      <div class="rrow"><button class="dd" aria-label="单元格样式"><svg class="ic"><use href="#style"/></svg><svg class="crt"><use href="#caret"/></svg></button></div>
      <div class="rrow"><button class="dd" aria-label="单元格"><svg class="ic"><use href="#frame"/></svg><svg class="crt"><use href="#caret"/></svg></button></div>
    </div>
  </div>
  <div class="rgroup g7 last">
    <div class="rrow">
      <button class="lb"><svg class="ic"><use href="#filld"/></svg>填充<svg class="crt"><use href="#caret"/></svg></button>
      <button class="lb"><svg class="ic"><use href="#sort"/></svg>排序<svg class="crt"><use href="#caret"/></svg></button>
      <button class="lb"><svg class="ic"><use href="#freeze"/></svg>冻结<svg class="crt"><use href="#caret"/></svg></button>
    </div>
    <div class="rrow">
      <button class="lb"><svg class="ic"><use href="#sum"/></svg>求和<svg class="crt"><use href="#caret"/></svg></button>
      <button class="lb"><svg class="ic"><use href="#filter"/></svg>筛选<svg class="crt"><use href="#caret"/></svg></button>
      <button class="lb"><svg class="ic"><use href="#search"/></svg>查找<svg class="crt"><use href="#caret"/></svg></button>
    </div>
  </div>
</section>

<main class="d-flex flex-grow-1" style="min-height:0">
  <div class="left-edge d-flex flex-column flex-grow-1" style="min-width:0">
    <div class="fbar d-flex flex-shrink-0">
      <div class="fbox namebox d-flex align-items-center">
        <input class="flex-grow-1" value="F19" aria-label="名称框">
        <button aria-label="名称列表"><svg class="ic"><use href="#chev"/></svg></button>
      </div>
      <div class="fbox d-flex align-items-center flex-grow-1 ps-4">
        <button aria-label="查找公式"><svg class="ic"><use href="#fsearch"/></svg></button>
        <button class="ms-3 me-2" aria-label="插入函数"><svg class="ic"><use href="#fx"/></svg></button>
        <span class="vr-s ms-1"></span>
        <input class="flex-grow-1 ps-2" aria-label="编辑栏">
      </div>
    </div>
    <div class="d-flex flex-grow-1" style="min-height:0">
      <div class="grid-view flex-grow-1">
        <table class="cells" id="cells"></table>
        <svg class="arrow" viewBox="735 391 90 100"><defs><filter id="sh" x="-30%" y="-30%" width="160%" height="160%"><feDropShadow dx="3" dy="3" stdDeviation="2" flood-opacity=".6"/></filter></defs>
          <g filter="url(#sh)"><path d="M743.500 480.500 794 414" stroke="red" stroke-width="3" stroke-linecap="round"/><path d="M808.500 396.500 798 421l-4-6-6-2z" fill="red" stroke="#c00" stroke-width=".5"/></g></svg>
      </div>
      <div class="vscroll d-flex flex-column align-items-center flex-shrink-0">
        <svg width="8" height="2"><path d="M0 0h8v2H0z" fill="#aaa"/></svg>
        <svg class="tri mt-2" width="6" height="5"><path d="M3 0l3 5H0z"/></svg>
        <div class="thumb vthumb"></div>
        <svg class="tri mt-auto mb-2" width="6" height="5"><path d="M0 0h6L3 5z"/></svg>
      </div>
    </div>
    <div class="sheetbar d-flex flex-shrink-0 ps-2">
      <button class="nav-b" aria-label="首个"><svg class="ic" viewBox="0 0 10 12"><path d="M1 1v10M9 1.500 4.500 6 9 10.500"/></svg></button>
      <button class="nav-b" aria-label="上一个"><svg class="ic" viewBox="0 0 10 12"><path d="M7 1.500 2.500 6 7 10.500"/></svg></button>
      <button class="nav-b" aria-label="下一个"><svg class="ic" viewBox="0 0 10 12"><path d="M3 1.500 7.500 6 3 10.500"/></svg></button>
      <button class="nav-b me-3" aria-label="末个"><svg class="ic" viewBox="0 0 10 12"><path d="M9 1v10M1 1.500 5.500 6 1 10.500"/></svg></button>
      <a class="sheet ms-1 me-2 pe-1" href="#">Sheet2</a>
      <a class="sheet on" href="#">Sheet1</a>
      <button class="nav-b" aria-label="新建工作表"><svg width="10" height="10" fill="none" stroke="#222" stroke-width="2"><path d="M5 0v10M0 5h10"/></svg></button>
      <div class="hscroll ms-auto d-flex align-items-center">
        <svg width="2" height="8"><path d="M0 0h2v8H0z" fill="#aaa"/></svg>
        <svg class="tri ms-3 me-2" width="5" height="6"><path d="M5 0v6L0 3z"/></svg>
        <div class="thumb hthumb"></div>
        <svg class="tri ms-auto me-3" width="5" height="6"><path d="M0 0v6l5-3z"/></svg>
        <svg width="2" height="8"><path d="M0 0h2v8H0z" fill="#aaa"/></svg>
      </div>
    </div>
  </div>

  <aside class="panel d-flex flex-column flex-shrink-0">
    <div class="d-flex align-items-center pt-3 ps-1 pb-1">
      <span class="panel-title me-2">选择窗格</span><svg class="crt me-auto"><use href="#caret"/></svg>
      <button class="me-2 pe-1" aria-label="固定"><svg class="ic"><use href="#pin"/></svg></button>
      <button class="me-1" aria-label="关闭窗格"><svg class="ic"><use href="#close"/></svg></button>
    </div>
    <div class="sub">文档中的对象</div>
    <div class="objects flex-grow-1"></div>
    <div class="d-flex align-items-center mt-2 gap-1"><span class="me-1">叠放次序</span>
      <button class="pb sq" aria-label="下移"><svg class="ic mx-auto" style="color:#aaa"><use href="#chev"/></svg></button>
      <button class="pb sq" aria-label="上移"><svg class="ic mx-auto" style="color:#aaa" viewBox="0 0 16 16"><path d="M3.500 10.500 8 6l4.500 4.500"/></svg></button>
    </div>
    <div class="d-flex gap-1 mt-2"><button class="pb tx">全部显示</button><button class="pb tx">全部隐藏</button></div>
  </aside>

  <nav class="side d-flex flex-column align-items-center flex-shrink-0">
    <button class="min" aria-label="收起"><svg class="ic"><path d="M1 8h14" stroke="#888" stroke-width="2"/></svg></button>
    <button class="on" aria-label="选择"><svg class="ic"><use href="#cursor"/></svg></button>
    <button class="dim" aria-label="属性"><svg class="ic"><use href="#sliders"/></svg></button>
    <button class="dim" aria-label="大小"><svg class="ic"><use href="#resize"/></svg></button>
    <button aria-label="美化"><svg class="ic"><use href="#beauty"/></svg></button>
    <button aria-label="工具"><svg class="ic"><use href="#tools"/></svg></button>
    <button aria-label="文档"><svg class="ic"><use href="#book"/></svg></button>
    <button aria-label="帮助"><svg class="ic"><use href="#help"/></svg></button>
    <button aria-label="更多"><svg class="ic"><use href="#more"/></svg></button>
  </nav>
</main>

<footer class="statusbar d-flex align-items-center flex-shrink-0">
  <button aria-label="宏"><svg class="ic"><use href="#macro"/></svg></button>
  <div class="stools ms-auto d-flex align-items-center">
    <button class="st" aria-label="护眼"><svg class="ic"><use href="#eye"/></svg></button>
    <button class="dd ms-2" aria-label="聚焦"><svg class="ic"><use href="#cross"/></svg><svg class="crt"><use href="#caret"/></svg></button>
    <span class="vr-s ms-2 me-2"></span>
    <button class="st on" aria-label="普通视图"><svg class="ic"><use href="#normal"/></svg></button>
    <button class="st ms-2" aria-label="分页预览"><svg class="ic"><use href="#split"/></svg></button>
    <button class="st ms-2" aria-label="阅读布局"><svg class="ic"><use href="#read"/></svg></button>
    <span class="vr-s ms-2 me-3"></span>
    <button class="d-flex align-items-center gap-2 zoomv"><span class="me-1">175%</span><svg class="crt"><use href="#caret"/></svg></button>
    <button class="ms-2 ps-1 me-2 pe-1" aria-label="缩小"><svg class="ic" stroke-width="2"><use href="#minus"/></svg></button>
    <input class="zoomer" type="range" min="0" max="100" value="50" aria-label="缩放">
  </div>
</footer>

<div class="wmark d-flex align-items-center">
  <svg width="44" height="42" viewBox="0 0 44 42"><path d="M42 1C22 1 2 12 1 27c0 4 3 7 6 9C2 24 20 8 42 1z" fill="#3f86c8"/><path d="M38 3C22 9 10 18 14 24c4 4 14 1 18 6 2 4-4 8-14 9 14 3 24-3 24-12 0-12-18-5-20-11-1-5 8-10 16-13z" fill="#56b06c"/><path d="M9 37c12 2 20-2 20-6-4 2-12 5-20 6z" fill="#4f9bd6"/></svg>
  <div><div class="cn">极光下载站</div><div class="en">www.xz7.com</div></div>
</div>
<div class="ime d-flex align-items-center justify-content-center"><span>CH</span><svg width="12" height="14" viewBox="0 0 12 14" fill="none" stroke="#222" stroke-width="1.400"><path d="M5 1c3 3 1 7-3 8 3 3 8 2 8-2 0-3-2-5-5-6zM1 12l2-2"/></svg><span>简</span></div>

<script>
  const columns = 'ABCDEFGHIJKLMN'.split('');
  const values = { E16:11, F16:22, G16:33, H16:44, I16:55 };
  const active = { col:'F', row:19 };
  let html = '<colgroup><col class="c-head">' + columns.map((c, i) => i < 13 ? '<col class="c-col">' : '<col>').join('') + '</colgroup><thead><tr>' +
    '<th scope="col"><svg class="ms-4" width="11" height="11"><path d="M11 0v9a2 2 0 0 1-2 2H0z" fill="#777"/></svg></th>' +
    columns.map((c, i) => `<th scope="col"${c === active.col ? ' class="on"' : ''}>${i < 13 ? c : ''}</th>`).join('') + '</tr></thead><tbody>';
  for (let r = 12; r <= 36; r++) {
    html += `<tr${r === 12 ? ' class="cut"' : ''}><th scope="row"${r === active.row ? ' class="on"' : ''}>${r}</th>` +
      columns.map(c => `<td${c === active.col && r === active.row ? ' class="sel"' : ''}>${values[c + r] ?? ''}</td>`).join('') + '</tr>';
  }
  document.getElementById('cells').innerHTML = html + '</tbody>';
</script>
<script src="https://cdn.jsdelivr.net/npm/bootstrap@5.3.0/dist/js/bootstrap.bundle.min.js"></script>
</body>
</html>
